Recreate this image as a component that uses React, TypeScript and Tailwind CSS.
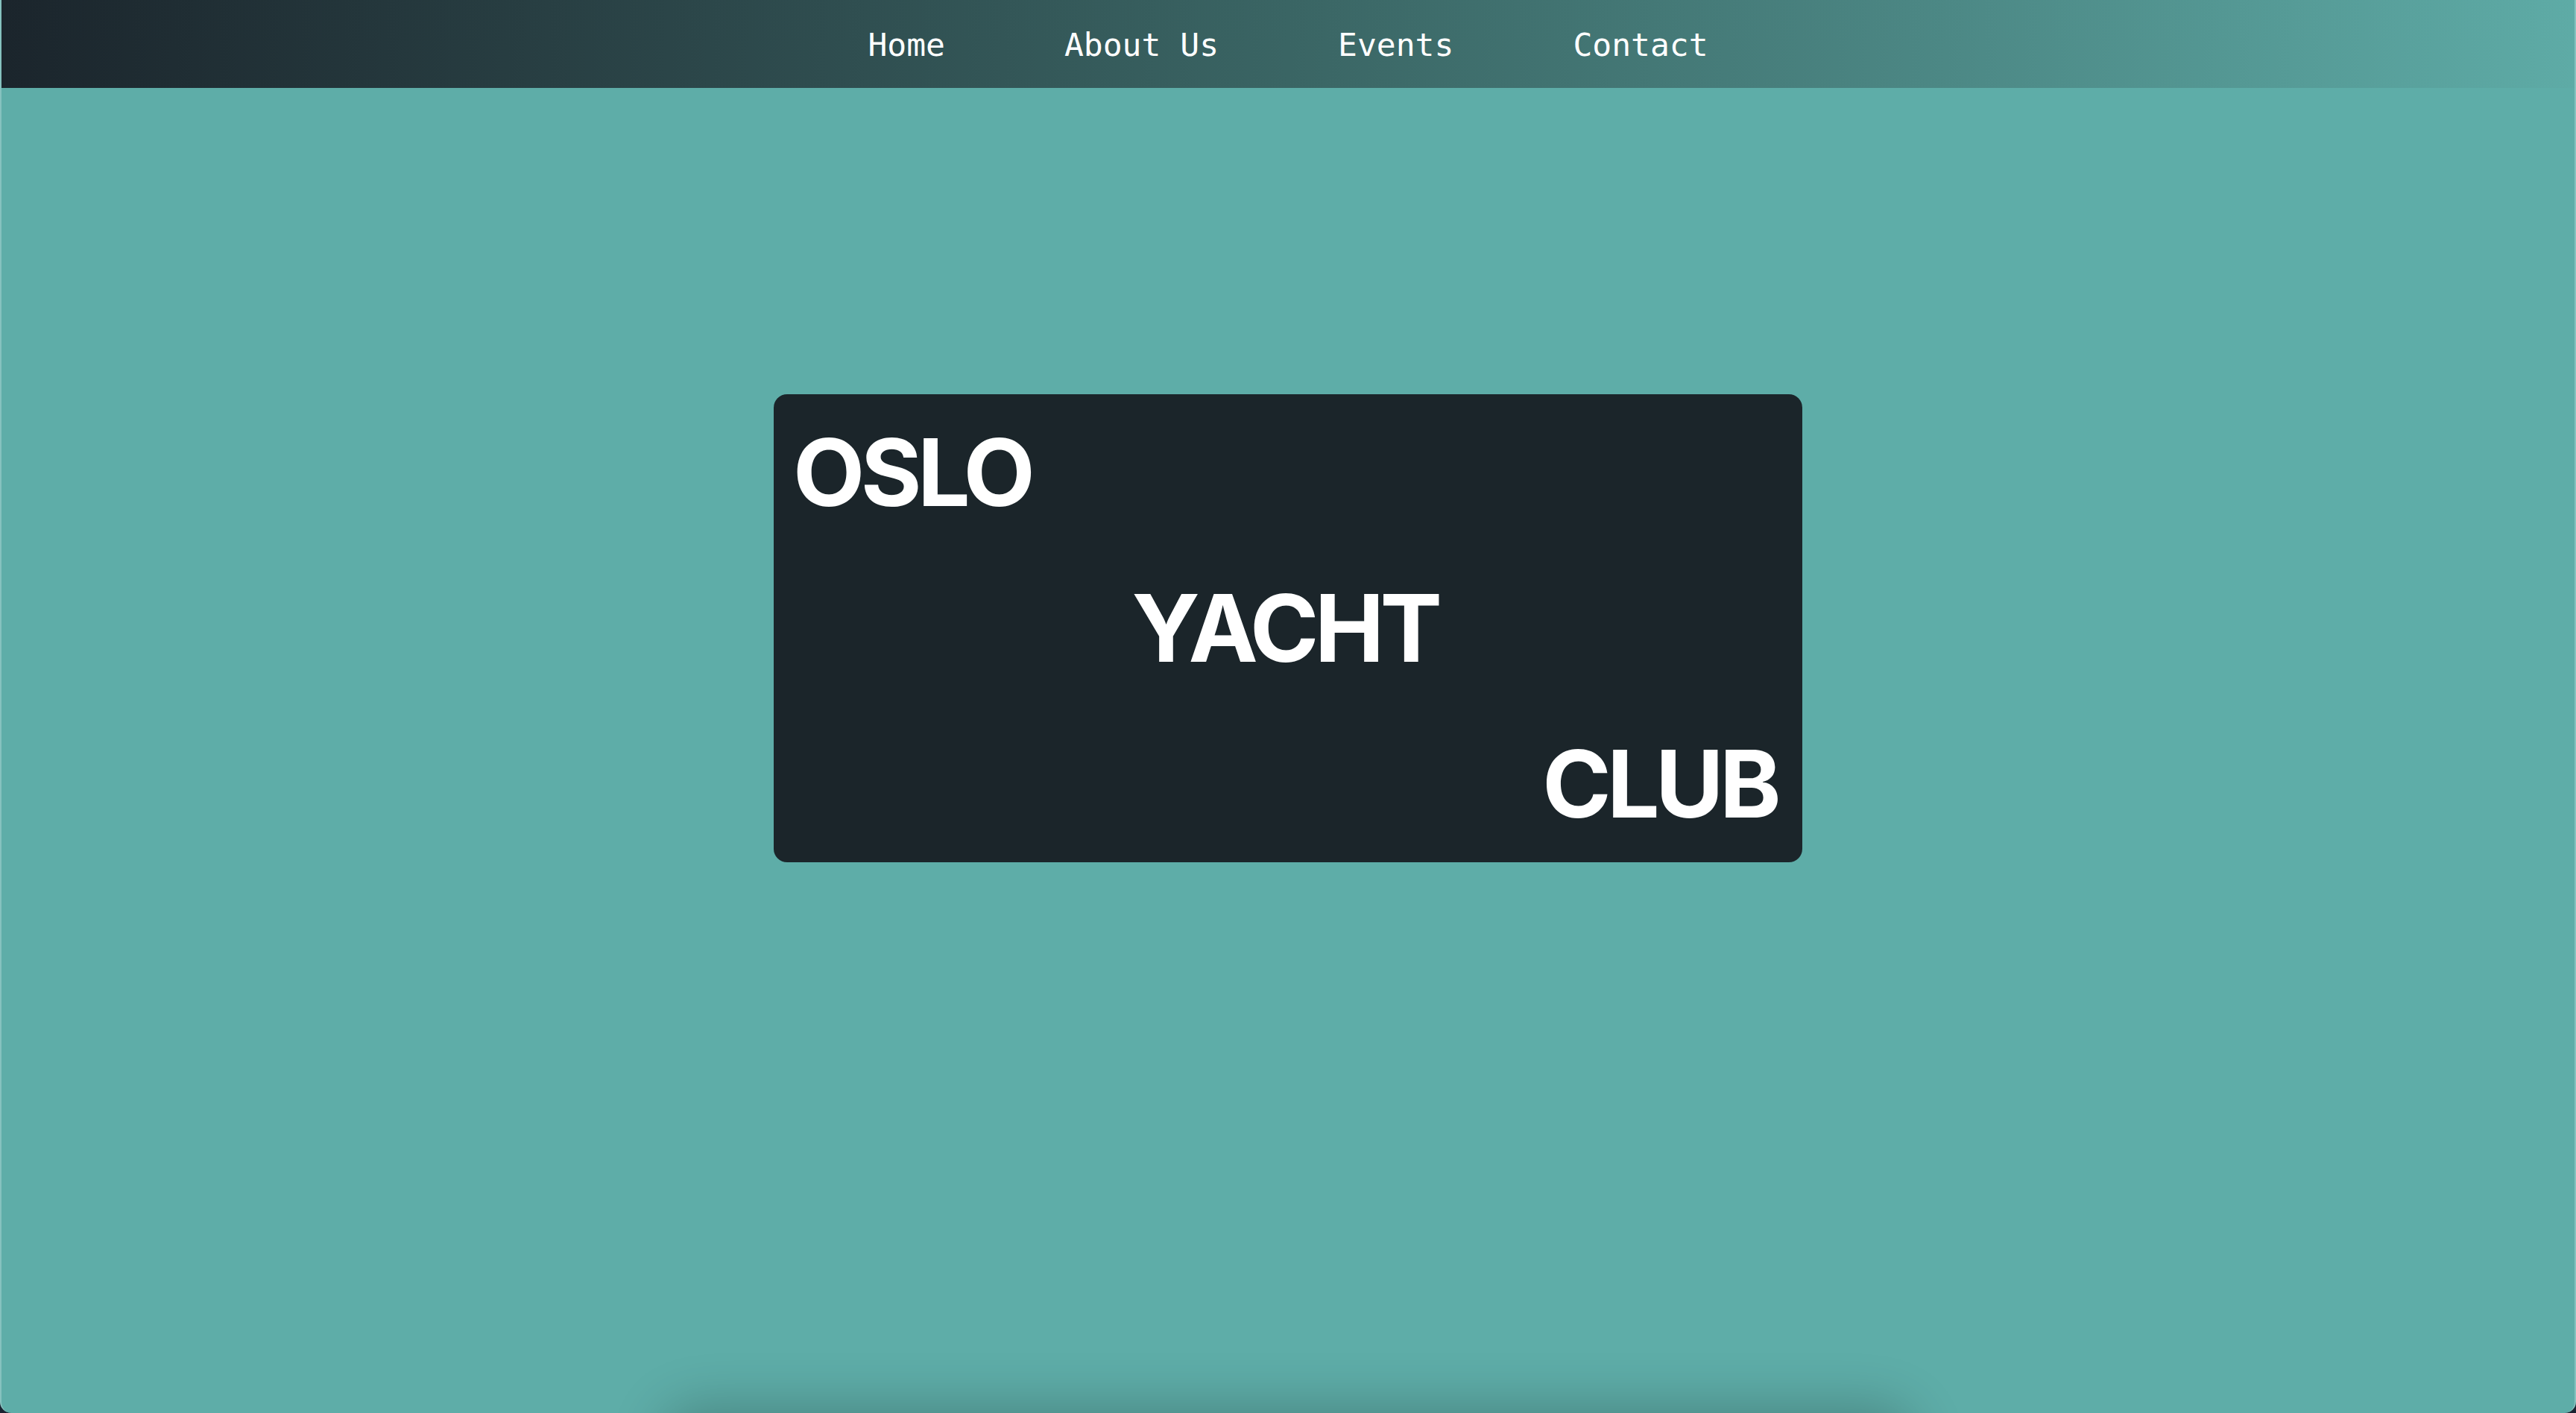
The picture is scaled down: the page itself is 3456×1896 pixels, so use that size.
const links = ["Home", "About Us", "Events", "Contact"];

function NavBar() {
  return (
    <nav className="h-[118px] flex items-center justify-center bg-gradient-to-r from-[#1b252c] via-[#3a6564] to-[#5eaba6]">
      <ul className="flex items-center gap-[160px] pt-[2px]">
        {links.map((label) => (
          <li key={label}>
            <a
              href="#"
              className="text-[43px] leading-none text-white font-['DejaVu_Sans_Mono',monospace]"
            >
              {label}
            </a>
          </li>
        ))}
      </ul>
    </nav>
  );
}

function Logo() {
  return (
    <div className="w-[1380px] h-[628px] mx-auto rounded-[18px] bg-[#1b252a] pl-[26px] pr-[34px] flex flex-col text-white font-['Inter',sans-serif] font-bold text-[125px] leading-[209px] tracking-[-0.045em]">
      <div className="text-left">OSLO</div>
      <div className="text-center">YACHT</div>
      <div className="text-right">CLUB</div>
    </div>
  );
}

export default function App() {
  return (
    <div className="h-[1896px] bg-[#1a2331]">
      <div className="relative h-full overflow-hidden rounded-b-[15px] border-x-2 border-[#86c2bf] bg-[#5eada8]">
        <NavBar />
        <main className="pt-[411px]">
          <Logo />
        </main>
        <div className="absolute left-1/2 top-[1896px] -translate-x-1/2 w-[1660px] h-[200px] rounded-[40px] shadow-[0_0_70px_10px_rgba(0,0,0,0.22)]" />
      </div>
    </div>
  );
}
